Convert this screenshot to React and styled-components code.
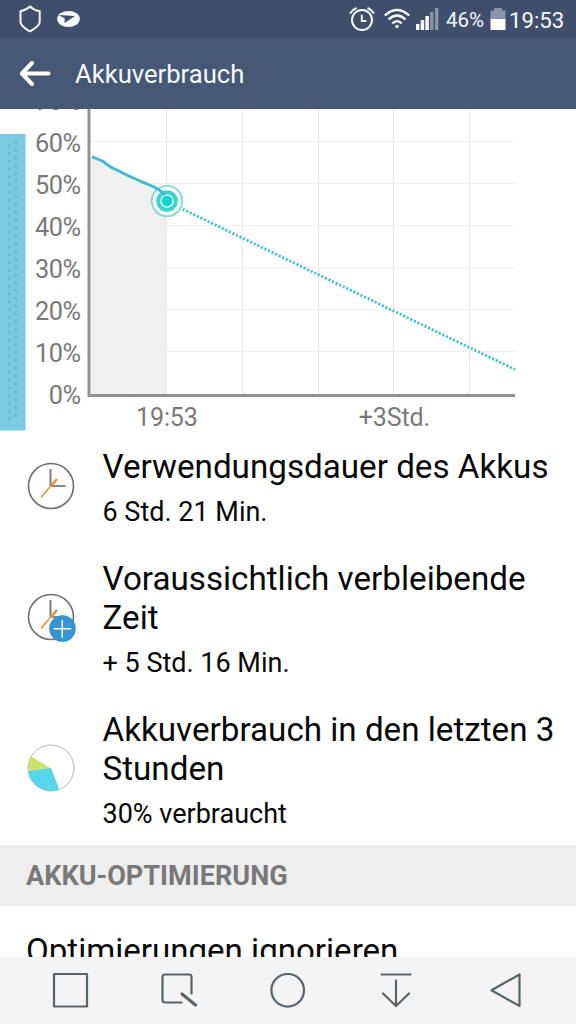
import React from "react";
import styled, { createGlobalStyle } from "styled-components";

const GlobalStyle = createGlobalStyle`
  * {
    box-sizing: border-box;
  }
  body {
    margin: 0;
    background-color: #fff;
    font-family: Roboto, sans-serif;
  }
`;

const Screen = styled.div`
  display: flex;
  flex-direction: column;
  width: 576px;
  height: 1024px;
  overflow: hidden;
  background-color: #fff;
`;

const StatusBar = styled.div`
  display: flex;
  align-items: center;
  justify-content: space-between;
  flex: none;
  height: 38px;
  padding: 0 12px 0 18px;
  background-color: #3f4f6b;
  color: #f4fbff;
`;

const StatusGroup = styled.div`
  display: flex;
  align-items: center;
`;

const StatusIcon = styled.svg`
  display: block;
  flex: none;
  margin-right: ${({ $gap }) => $gap || 0}px;
`;

const Percent = styled.span`
  width: 44px;
  font-size: 20.5px;
  line-height: 38px;
  padding-top: 2px;
`;

const Time = styled.span`
  width: 55px;
  font-size: 22.2px;
  line-height: 38px;
  padding-top: 2px;
  white-space: nowrap;
`;

const Header = styled.header`
  display: flex;
  align-items: center;
  flex: none;
  gap: 24px;
  height: 71px;
  padding-left: 19px;
  background-color: #465876;
`;

const HeaderTitle = styled.h1`
  margin: 0;
  font-size: 25.6px;
  font-weight: 400;
  color: #f4fbff;
`;

const Content = styled.main`
  flex: 1;
  min-height: 0;
  overflow: hidden;
`;

const ChartPanel = styled.section`
  display: flex;
  height: 323px;
`;

const EdgeHandle = styled.svg`
  display: block;
  flex: none;
  margin-top: 25px;
`;

const YAxis = styled.div`
  width: 54.5px;
  margin-top: -28px;
`;

const YLabel = styled.div`
  height: 42px;
  line-height: 42px;
  font-size: 25.3px;
  letter-spacing: -0.5px;
  text-align: right;
  color: #797979;
`;

const Plot = styled.div`
  width: 430px;
  margin-left: 6.5px;
`;

const XAxis = styled.div`
  display: flex;
  gap: 161px;
  padding-left: 49px;
  margin-top: 6px;
  font-size: 25px;
  letter-spacing: -0.1px;
  line-height: 30px;
  color: #797979;
`;

const Item = styled.div`
  display: flex;
  align-items: center;
  padding: 15px 0 16px 27px;
`;

const ItemIcon = styled.svg`
  display: block;
  flex: none;
  margin: -4px 25.5px 0 0;
`;

const ItemTitle = styled.h2`
  margin: 0 0 10px;
  font-size: 33.2px;
  font-weight: 400;
  line-height: 39px;
  color: #080808;
`;

const ItemText = styled.p`
  margin: 0;
  font-size: 27px;
  line-height: 32px;
  color: #080808;
`;

const SectionTitle = styled.h3`
  height: 61px;
  margin: -1px 0 0;
  padding-left: 26px;
  font-size: 27.1px;
  font-weight: 700;
  line-height: 63px;
  color: #797979;
  background-color: #eeeeee;
`;

const Option = styled.div`
  padding: 25px 0 0 26px;
  font-size: 33.1px;
  line-height: 39px;
  color: #080808;
`;

const NavBar = styled.nav`
  display: flex;
  align-items: center;
  flex: none;
  height: 67px;
  padding: 0 0 1px 50px;
  gap: 69px;
  background-color: #f4f4f4;
`;

const NavIcon = styled.svg`
  display: block;
  width: 40px;
  height: 40px;
  fill: none;
  stroke: #59646a;
  stroke-width: 2.2;
  stroke-linecap: round;
  stroke-linejoin: round;
`;

const yLabels = ["70%", "60%", "50%", "40%", "30%", "20%", "10%", "0%"];
const gridX = [79.5, 155.5, 231.5, 306.5, 382.5];
const gridY = [32.5, 74.5, 116.5, 158.5, 200.5, 242.5];
const handleRows = Array.from({ length: 36 }, (_, i) => 10 + i * 7.8);

const Hands = () => (
  <>
    <circle cx="24" cy="24" r="22.5" fill="#fff" stroke="#6b6f72" strokeWidth="1.6" />
    <path d="M23.5 7v17" stroke="#777c80" strokeWidth="2" />
    <path d="M24 24h14.5" stroke="#777c80" strokeWidth="1.8" />
    <path d="M14 35.5L24.5 23" stroke="#e9903b" strokeWidth="1.5" />
    <path d="M23.5 24.5L30 17" stroke="#e9903b" strokeWidth="2.6" />
  </>
);

const ClockIcon = () => (
  <ItemIcon width="50" height="48" viewBox="0 0 50 48">
    <Hands />
  </ItemIcon>
);

const ClockPlusIcon = () => (
  <ItemIcon width="50" height="48" viewBox="0 0 50 48" overflow="visible">
    <Hands />
    <circle cx="35.5" cy="35.5" r="13.3" fill="#3594d4" />
    <path d="M26.7 35.7h17.6M35.2 26.9v17.6" stroke="#fff" strokeWidth="1.5" />
  </ItemIcon>
);

const PieIcon = () => (
  <ItemIcon width="50" height="48" viewBox="0 0 50 48">
    <circle cx="24" cy="24" r="23" fill="#fff" stroke="#a5a5a5" strokeWidth="0.8" />
    <path d="M24 24.5L4.3 12.5A23 23 0 0 0 1.2 27z" fill="#cde26c" />
    <path d="M24 24L1.2 27A23 23 0 0 0 32.3 45.5z" fill="#57d5ea" />
  </ItemIcon>
);

const BatteryChart = () => (
  <svg width="430" height="288" viewBox="0 0 430 288" display="block">
    <path
      d="M4 47.5L17.5 55C24 61 40 68 54 75C64 79 75 82 80 92V285H4z"
      fill="#f0f0f0"
    />
    {gridX.map((x) => (
      <path key={x} d={`M${x} 0V285`} stroke="#e8e8e8" />
    ))}
    {gridY.map((y) => (
      <path key={y} d={`M3 ${y}H428`} stroke="#f0f0f0" />
    ))}
    <path d="M2 0V286.5H428" fill="none" stroke="#929292" strokeWidth="3" />
    <path
      d="M85 95L428 260.5"
      stroke="#3fc0ce"
      strokeWidth="2.8"
      strokeDasharray="2.1 1.85"
    />
    <circle cx="80" cy="92" r="15.2" fill="#fff" fillOpacity="0.8" stroke="#82d9cf" strokeWidth="1.8" />
    <circle cx="80" cy="92" r="8.8" fill="#e8fffc" stroke="#38d5ca" strokeWidth="4" />
    <circle cx="80" cy="92" r="5.4" fill="#14d5ca" />
    <path
      d="M5 47.5C9 50 13 50.5 17 53C21 57 25 59 30 61C39 66 46 69 53 72C61 76 72 78 78 86"
      fill="none"
      stroke="#42b9d0"
      strokeWidth="2.8"
    />
  </svg>
);

const App = () => {
  return (
    <Screen>
      <GlobalStyle />
      <StatusBar>
        <StatusGroup>
          <StatusIcon width="24" height="28" viewBox="0 0 24 28" $gap={15}>
            <path
              d="M12 1.5C14.5 4 18 5.5 21.7 6.3V17C21.7 21 16 24 12 26.5C8 24 2.5 21 2.5 17V6.3C6 5.5 9.5 4 12 1.5z"
              fill="none"
              stroke="#f4fbff"
              strokeWidth="2"
              strokeLinejoin="round"
            />
          </StatusIcon>
          <StatusIcon width="24" height="18" viewBox="0 0 24 18">
            <ellipse cx="11.5" cy="9" rx="11.3" ry="8" fill="#f4fbff" />
            <path d="M1.500 5L18 6L7.500 13L7.800 8.500z" fill="#3f4f6b" />
          </StatusIcon>
        </StatusGroup>
        <StatusGroup>
          <StatusIcon width="26" height="26" viewBox="0 0 26 26" $gap={9}>
            <g fill="none" stroke="#f4fbff" strokeWidth="1.9">
              <circle cx="13" cy="14" r="10" />
              <path d="M12.8 8.8V15H17.3" />
              <path d="M1 7.5Q3 3.8 7.5 2M25 7.5Q23 3.8 18.5 2" strokeWidth="2" />
            </g>
          </StatusIcon>
          <StatusIcon width="26" height="22" viewBox="0 0 26 22" $gap={6}>
            <g fill="none" stroke="#f4fbff" strokeWidth="2.3">
              <path d="M0.8 7.5Q13-3.5 25.2 7.5" />
              <path d="M4.5 11.5Q13 3.5 21.5 11.5" />
              <path d="M8.3 15.3Q13 11 17.7 15.3" />
            </g>
            <circle cx="13" cy="18.5" r="1.7" fill="#f4fbff" />
          </StatusIcon>
          <StatusIcon width="23" height="24" viewBox="0 0 23 24" $gap={7}>
            <path d="M0 17h3.5v6H0zM4.7 13h3.5v10H4.7zM9.4 9h3.5v14H9.400z" fill="#f4fbff" />
            <path d="M14.2 5h3.3v18h-3.3zM19 1h3.3v22H19z" fill="#8995a8" />
          </StatusIcon>
          <Percent>46%</Percent>
          <StatusIcon width="16" height="24" viewBox="0 0 16 24" $gap={3}>
            <path d="M4 1h8v2.5h3.5V12H0.5V3.5H4z" fill="#8995a8" />
            <path d="M0.5 12h15v11h-15z" fill="#fff" />
          </StatusIcon>
          <Time>19:53</Time>
        </StatusGroup>
      </StatusBar>
      <Header>
        <svg width="32" height="28" viewBox="0 0 32 28">
          <path
            d="M13 3L2.8 13.5L13 24M3 13.5H29.5"
            fill="none"
            stroke="#fff"
            strokeWidth="4"
            strokeLinecap="round"
            strokeLinejoin="round"
          />
        </svg>
        <HeaderTitle>Akkuverbrauch</HeaderTitle>
      </Header>
      <Content>
        <ChartPanel>
          <EdgeHandle width="26" height="297" viewBox="0 0 26 297">
            <path d="M0 0h25.5v296.5H0z" fill="#7dcbe2" />
            {handleRows.map((y) => (
              <g key={y} fill="#70bed6">
                <circle cx="9.5" cy={y + 1.5} r="1.9" />
                <circle cx="16" cy={y - 1.5} r="1.9" />
              </g>
            ))}
          </EdgeHandle>
          <YAxis>
            {yLabels.map((label) => (
              <YLabel key={label}>{label}</YLabel>
            ))}
          </YAxis>
          <Plot>
            <BatteryChart />
            <XAxis>
              <span>19:53</span>
              <span>+3Std.</span>
            </XAxis>
          </Plot>
        </ChartPanel>
        <Item>
          <ClockIcon />
          <div>
            <ItemTitle>Verwendungsdauer des Akkus</ItemTitle>
            <ItemText>6 Std. 21 Min.</ItemText>
          </div>
        </Item>
        <Item>
          <ClockPlusIcon />
          <div>
            <ItemTitle>
              Voraussichtlich verbleibende
              <br />
              Zeit
            </ItemTitle>
            <ItemText>+ 5 Std. 16 Min.</ItemText>
          </div>
        </Item>
        <Item>
          <PieIcon />
          <div>
            <ItemTitle>
              Akkuverbrauch in den letzten 3
              <br />
              Stunden
            </ItemTitle>
            <ItemText>30% verbraucht</ItemText>
          </div>
        </Item>
        <SectionTitle>AKKU-OPTIMIERUNG</SectionTitle>
        <Option>Optimierungen ignorieren</Option>
      </Content>
      <NavBar>
        <NavIcon viewBox="0 0 40 40">
          <path d="M4 4H37V36.5H4z" />
        </NavIcon>
        <NavIcon viewBox="0 0 40 40">
          <path d="M32.5 23.5V7Q32.5 4.5 30 4.5H6Q3.5 4.5 3.5 7V30Q3.5 32.5 6 32.5H22.5" />
          <path d="M23 24L36.5 35" strokeWidth="3.2" />
        </NavIcon>
        <NavIcon viewBox="0 0 40 40">
          <circle cx="19.7" cy="20.3" r="16.3" />
        </NavIcon>
        <NavIcon viewBox="0 0 40 40">
          <path d="M4.5 4.5H33.5M19 10.5V35.5M6 23.5L19 36L32 23.5" />
        </NavIcon>
        <NavIcon viewBox="0 0 40 40">
          <path d="M33.5 4.5V36L5.5 20.3z" />
        </NavIcon>
      </NavBar>
    </Screen>
  );
};

export default App;
